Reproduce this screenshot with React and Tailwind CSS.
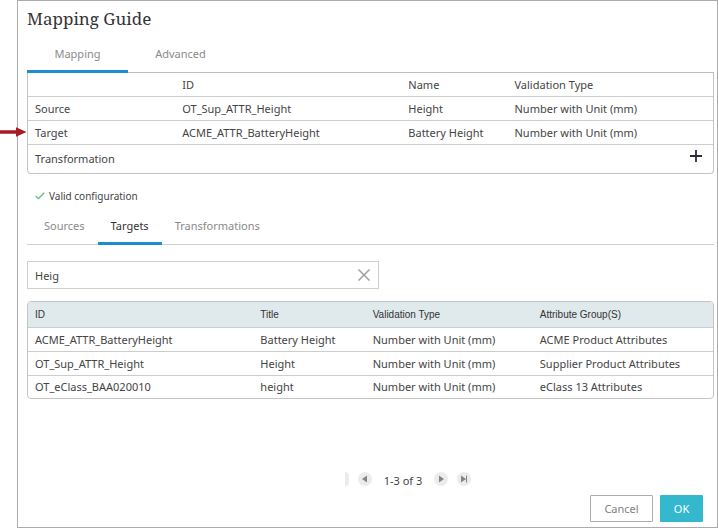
import React, { useState } from 'react';

const mappingRows = [
  { label: 'Source', id: 'OT_Sup_ATTR_Height', name: 'Height', type: 'Number with Unit (mm)' },
  { label: 'Target', id: 'ACME_ATTR_BatteryHeight', name: 'Battery Height', type: 'Number with Unit (mm)', marked: true },
];

const results = [
  ['ACME_ATTR_BatteryHeight', 'Battery Height', 'Number with Unit (mm)', 'ACME Product Attributes'],
  ['OT_Sup_ATTR_Height', 'Height', 'Number with Unit (mm)', 'Supplier Product Attributes'],
  ['OT_eClass_BAA020010', 'height', 'Number with Unit (mm)', 'eClass 13 Attributes'],
];

function MarkerArrow() {
  return (
    <svg className="absolute top-1/2 right-full h-3 w-7 -translate-y-1/2" viewBox="0 0 28 12" aria-hidden="true">
      <path d="M0 3.2H16V0.2L26.5 5L16 9.8V6.8H0Z" fill="#a51c22" />
    </svg>
  );
}

function PagerButton({ label, children }) {
  return (
    <button type="button" aria-label={label} className="flex size-[14px] items-center justify-center rounded-full bg-[#ececec]">
      <svg className="size-[14px]" viewBox="0 0 14 14" fill="#858585" aria-hidden="true">
        {children}
      </svg>
    </button>
  );
}

const cell = 'truncate border-b border-[#cdcdcd] px-[7px] text-left font-normal';
const lastCell = 'truncate px-[7px] text-left font-normal';

export default function App() {
  const [query, setQuery] = useState('Heig');

  return (
    <div className="min-h-screen bg-white pl-[17px] font-['Noto_Sans','Open_Sans',sans-serif] text-[11px] leading-4 text-[#444444]">
      <main className="flex min-h-screen flex-col border border-[#ababab] pr-[3px] pl-[9px]">
        <h1 className="h-9 pt-[6px] font-['Noto_Serif','DejaVu_Serif_Condensed','DejaVu_Serif',serif] text-[17px] leading-6 text-[#333333]">
          Mapping Guide
        </h1>

        <div role="tablist" aria-label="Mapping mode" className="flex h-9 border-b border-[#bdbdbd] text-[#8a8a8a]">
          <button type="button" role="tab" aria-selected="true" className="-mb-px h-9 w-[101px] border-b-3 border-[#1b8fcd]">
            Mapping
          </button>
          <button type="button" role="tab" aria-selected="false" className="-mb-px h-9 w-[105px] border-b-3 border-transparent">
            Advanced
          </button>
        </div>

        <table className="w-full table-fixed border-separate border-spacing-0 rounded-b border border-t-0 border-[#c4c4c4]">
          <colgroup>
            <col className="w-[21.5%]" />
            <col className="w-[33%]" />
            <col className="w-[15.5%]" />
            <col />
          </colgroup>
          <thead>
            <tr className="h-6">
              <td className={cell} />
              <th scope="col" className={cell}>ID</th>
              <th scope="col" className={cell}>Name</th>
              <th scope="col" className={cell}>Validation Type</th>
            </tr>
          </thead>
          <tbody>
            {mappingRows.map((row) => (
              <tr key={row.label} className="h-6">
                <th scope="row" className="relative border-b border-[#cdcdcd] px-[7px] text-left font-normal">
                  {row.marked && <MarkerArrow />}
                  {row.label}
                </th>
                <td className={cell}>{row.id}</td>
                <td className={cell}>{row.name}</td>
                <td className={cell}>{row.type}</td>
              </tr>
            ))}
            <tr className="h-7">
              <th scope="row" className={lastCell}>Transformation</th>
              <td />
              <td />
              <td className="px-[11px] align-top">
                <button type="button" aria-label="Add transformation" className="mt-[5px] ml-auto block">
                  <svg className="size-3" viewBox="0 0 12 12" stroke="#2c2c3a" strokeWidth="1.8" aria-hidden="true">
                    <path d="M6 0V12M0 6H12" />
                  </svg>
                </button>
              </td>
            </tr>
          </tbody>
        </table>

        <p className="mt-[14px] flex items-center gap-1 pl-2 text-[10px] leading-4">
          <svg className="h-3 w-[10px]" viewBox="0 0 10 12" fill="none" stroke="#62b876" strokeWidth="1.3" aria-hidden="true">
            <path d="M0.7 6L3.4 8.6L9.3 2.7" />
          </svg>
          Valid configuration
        </p>

        <div role="tablist" aria-label="Mapping items" className="mt-[5px] flex h-9 border-b border-[#d0d0d0] text-[#8a8a8a]">
          <button type="button" role="tab" aria-selected="false" className="-mb-px h-9 border-b-3 border-transparent pr-[13px] pl-[17px]">
            Sources
          </button>
          <button type="button" role="tab" aria-selected="true" className="-mb-px h-9 border-b-3 border-[#1b8fcd] px-[13px] text-[#333333]">
            Targets
          </button>
          <button type="button" role="tab" aria-selected="false" className="-mb-px h-9 border-b-3 border-transparent px-[13px]">
            Transformations
          </button>
        </div>

        <div className="mt-4 flex h-7 w-[352px] max-w-full items-center border border-[#cfcfcf] pr-2 pl-[7px]">
          <input
            type="text"
            aria-label="Search targets"
            value={query}
            onChange={(e) => setQuery(e.target.value)}
            className="h-full min-w-0 flex-1 bg-transparent outline-none"
          />
          <button type="button" aria-label="Clear search" onClick={() => setQuery('')}>
            <svg className="size-3" viewBox="0 0 12 12" stroke="#a0a0a0" strokeWidth="1.5" aria-hidden="true">
              <path d="M0.5 0.5L11.5 11.5M11.5 0.5L0.5 11.5" />
            </svg>
          </button>
        </div>

        <table className="mt-3 w-full table-fixed border-separate border-spacing-0 overflow-hidden rounded border border-[#c4c4c4]">
          <colgroup>
            <col className="w-[32.9%]" />
            <col className="w-[16.4%]" />
            <col className="w-[24.4%]" />
            <col />
          </colgroup>
          <thead className="bg-[#e0e9ec] font-['Liberation_Sans',Arial,sans-serif] text-[10px] text-[#333333]">
            <tr className="h-[26px]">
              <th scope="col" className={cell}>ID</th>
              <th scope="col" className={cell}>Title</th>
              <th scope="col" className={cell}>Validation Type</th>
              <th scope="col" className={cell}>Attribute Group(S)</th>
            </tr>
          </thead>
          <tbody>
            {results.map((row, i) => (
              <tr key={row[0]} className={i === results.length - 1 ? 'h-[22px]' : 'h-6'}>
                {row.map((value) => (
                  <td key={value} className={i === results.length - 1 ? lastCell : cell}>{value}</td>
                ))}
              </tr>
            ))}
          </tbody>
        </table>

        <nav aria-label="Pagination" className="mt-auto flex items-center justify-center pl-[75px]">
          <span className="mr-[9px] h-[14px] w-[4px] rounded-r-full bg-[#ececec]" />
          <PagerButton label="Previous page">
            <path d="M9 3.5V10.5L4 7Z" />
          </PagerButton>
          <span className="mx-3 pt-1 leading-4">1-3 of 3</span>
          <PagerButton label="Next page">
            <path d="M5 3.5V10.5L10 7Z" />
          </PagerButton>
          <span className="w-[9px]" />
          <PagerButton label="Last page">
            <path d="M4 3.5V10.5L9 7ZM9 3.5H10V10.5H9Z" />
          </PagerButton>
        </nav>

        <div className="mt-[6px] mb-[5px] flex justify-end gap-[7px] pr-[11px]">
          <button type="button" className="h-[27px] w-[63px] rounded-[1px] border border-[#ababab] bg-white text-[#808080]">
            Cancel
          </button>
          <button type="button" className="h-[27px] w-[43px] rounded-[1px] bg-[#33b8ce] text-white">
            OK
          </button>
        </div>
      </main>
    </div>
  );
}
